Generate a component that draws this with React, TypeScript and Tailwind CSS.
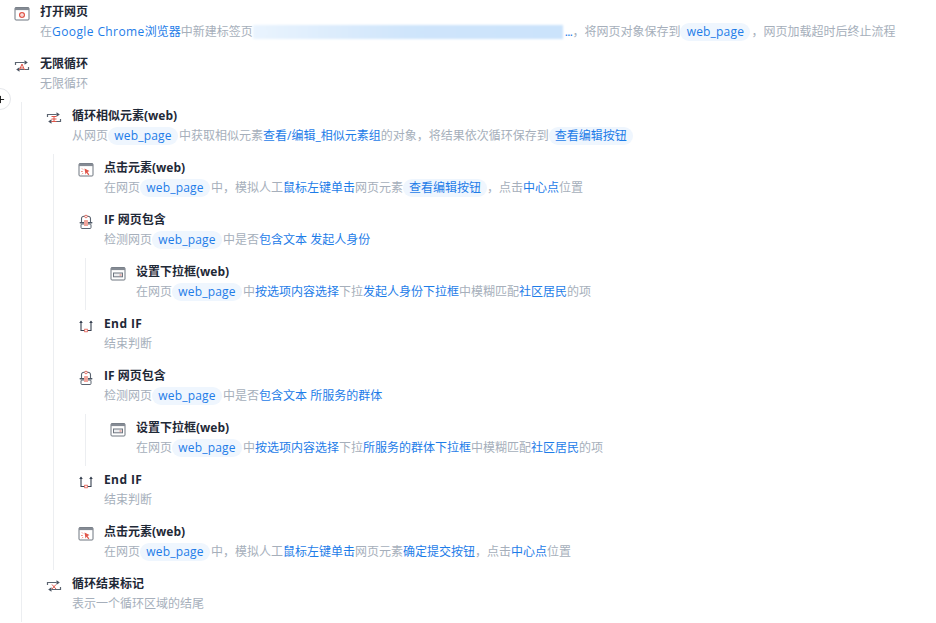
import type { ReactNode } from "react";
import { Plus } from "lucide-react";

const font = "font-['Open_Sans','Noto_Sans_CJK_SC',sans-serif]";

function WindowIcon({ children }: { children?: ReactNode }) {
  return (
    <svg width="16" height="16" viewBox="0 0 16 16" fill="none">
      <rect x="1" y="1.5" width="14" height="12.5" rx="1" stroke="#6f7680" strokeWidth="1" />
      <rect x="1" y="1.5" width="14" height="2.6" fill="#858b94" />
      {children}
    </svg>
  );
}

const OpenIcon = () => (
  <WindowIcon>
    <circle cx="8" cy="9" r="2.4" stroke="#e0564a" strokeWidth="1.3" />
    <circle cx="8" cy="9" r="0.6" fill="#e0564a" />
  </WindowIcon>
);

const ClickIcon = () => (
  <WindowIcon>
    <path d="M6.5 6.5l5 2.6-2 .8 1.8 2.6-1 .7-1.8-2.5-1 1.8z" fill="#e0564a" />
    <path d="M4 6.5l1 1M3.2 9.5h1.5M4 12.2l1-1" stroke="#e0564a" strokeWidth="0.8" />
  </WindowIcon>
);

const SelectIcon = () => (
  <WindowIcon>
    <rect x="3.5" y="7" width="9" height="3.8" fill="#eceef0" stroke="#6f7680" strokeWidth="1" />
    <path d="M9.5 9h2" stroke="#e0564a" strokeWidth="0.8" />
  </WindowIcon>
);

function LoopIcon({ children }: { children?: ReactNode }) {
  return (
    <svg width="16" height="16" viewBox="0 0 16 16" fill="none">
      <path d="M1.5 7V4.5h9" stroke="#5b6470" strokeWidth="1.2" />
      <path d="M10.5 2.2l3.3 2.3-3.3 2.3z" fill="#4b5563" />
      <path d="M14.5 9v2.5h-9" stroke="#5b6470" strokeWidth="1.2" />
      <path d="M5.5 9.2l-3.3 2.3 3.3 2.3z" fill="#4b5563" />
      <g stroke="#e0564a" strokeWidth="1">{children}</g>
    </svg>
  );
}

const IfIcon = () => (
  <svg width="16" height="16" viewBox="0 0 16 16" fill="none">
    <path d="M3.5 8V4.5C3.5 3 5.5 2 8 2s4.5 1 4.5 2.5V8" stroke="#5b6470" strokeWidth="1.1" />
    <circle cx="8" cy="2.5" r="1.3" fill="#fff" stroke="#e0564a" strokeWidth="0.8" />
    <rect x="1.5" y="8" width="13" height="1.6" rx="0.8" fill="#4b5563" />
    <rect x="3" y="10" width="10" height="4.5" rx="1" fill="none" stroke="#5b6470" strokeWidth="1" />
    <rect x="6" y="6" width="4" height="6" rx="0.5" fill="#f0a49b" />
  </svg>
);

const EndIfIcon = () => (
  <svg width="16" height="16" viewBox="0 0 16 16" fill="none">
    <path d="M3 3.5V12.5H6.5M13 3.5V12.5H9.5" stroke="#374151" strokeWidth="1.1" />
    <path d="M1.2 5L3 2.5 4.8 5zM11.2 5L13 2.5 14.8 5z" fill="#374151" />
    <rect x="6.7" y="11.2" width="2.6" height="2.6" fill="#fff" stroke="#e0564a" strokeWidth="0.8" />
  </svg>
);

const B = ({ children }: { children: ReactNode }) => <span className="text-[#1d7ce8]">{children}</span>;

const Web = () => (
  <span className="mr-px inline-flex h-[18px] w-[70px] items-center justify-center rounded-full bg-[#eff6fe] tracking-[0.2px] text-[#1d7ce8]">
    web_page
  </span>
);

const Pill = ({ children }: { children: ReactNode }) => (
  <span className="inline-flex h-[18px] items-center rounded-full bg-[#eff6fe] px-1.5 text-[#1d7ce8]">{children}</span>
);

function Row({ icon, title, children }: { icon: ReactNode; title: ReactNode; children: ReactNode }) {
  return (
    <div className="flex h-12 shrink-0">
      <div className="mr-2.5 w-4 shrink-0 pt-1">{icon}</div>
      <div className="min-w-0 whitespace-nowrap">
        <div className="h-5 text-xs leading-5 font-bold text-[#1f2937]">{title}</div>
        <div className="flex h-5 items-center text-xs text-[#a6afbb]">{children}</div>
      </div>
    </div>
  );
}

function Branch({ children }: { children: ReactNode }) {
  return <div className="-mt-1 ml-[7px] flex flex-col gap-1 border-l border-[#eceef1] pt-1 pl-6">{children}</div>;
}

const EndIf = () => <span className="tracking-[0.4px]">End IF</span>;

export default function App() {
  return (
    <div className={`relative h-[623px] w-[936px] overflow-hidden bg-white pt-0.5 pl-3.5 ${font}`}>
      <div className="absolute top-[88px] -left-[11px] flex h-[22px] w-[22px] items-center justify-center rounded-full border border-[#e5e7eb] bg-white text-[#111]">
        <Plus size={11} strokeWidth={2} />
      </div>
      <div className="flex flex-col gap-1">
        <Row icon={<OpenIcon />} title="打开网页">
          <span>在</span>
          <B>
            <span className="tracking-[0.4px]">Google Chrome</span>浏览器
          </B>
          <span>中新建标签页</span>
          <span className="mr-0.5 h-3.5 w-[310px] bg-gradient-to-r from-[#eaf4fe] via-[#cfe5fb] to-[#cbe3fb] blur-[1px]" />
          <span className="tracking-[-0.6px] text-[#1d7ce8]">...</span>
          <span>，将网页对象保存到</span>
          <Web />
          <span>，网页加载超时后终止流程</span>
        </Row>
        <Row
          icon={
            <LoopIcon>
              <path d="M5.5 12L8 6l2.5 6M6.5 10h3" />
            </LoopIcon>
          }
          title="无限循环"
        >
          无限循环
        </Row>
        <Branch>
          <Row
            icon={
              <LoopIcon>
                <path d="M5.5 6.5h5M8 6.5V11M5.5 9h5M5.5 11.5h5" />
              </LoopIcon>
            }
            title="循环相似元素(web)"
          >
            <span>从网页</span>
            <Web />
            <span>中获取相似元素</span>
            <B>查看/编辑_相似元素组</B>
            <span>的对象，将结果依次循环保存到</span>
            <Pill>查看编辑按钮</Pill>
          </Row>
          <Branch>
            <Row icon={<ClickIcon />} title="点击元素(web)">
              <span>在网页</span>
              <Web />
              <span>中，模拟人工</span>
              <B>鼠标左键单击</B>
              <span>网页元素</span>
              <Pill>查看编辑按钮</Pill>
              <span>，点击</span>
              <B>中心点</B>
              <span>位置</span>
            </Row>
            <Row icon={<IfIcon />} title="IF 网页包含">
              <span>检测网页</span>
              <Web />
              <span>中是否</span>
              <B>包含文本 发起人身份</B>
            </Row>
            <Branch>
              <Row icon={<SelectIcon />} title="设置下拉框(web)">
                <span>在网页</span>
                <Web />
                <span>中</span>
                <B>按选项内容选择</B>
                <span>下拉</span>
                <B>发起人身份下拉框</B>
                <span>中模糊匹配</span>
                <B>社区居民</B>
                <span>的项</span>
              </Row>
            </Branch>
            <Row icon={<EndIfIcon />} title={<EndIf />}>
              结束判断
            </Row>
            <Row icon={<IfIcon />} title="IF 网页包含">
              <span>检测网页</span>
              <Web />
              <span>中是否</span>
              <B>包含文本 所服务的群体</B>
            </Row>
            <Branch>
              <Row icon={<SelectIcon />} title="设置下拉框(web)">
                <span>在网页</span>
                <Web />
                <span>中</span>
                <B>按选项内容选择</B>
                <span>下拉</span>
                <B>所服务的群体下拉框</B>
                <span>中模糊匹配</span>
                <B>社区居民</B>
                <span>的项</span>
              </Row>
            </Branch>
            <Row icon={<EndIfIcon />} title={<EndIf />}>
              结束判断
            </Row>
            <Row icon={<ClickIcon />} title="点击元素(web)">
              <span>在网页</span>
              <Web />
              <span>中，模拟人工</span>
              <B>鼠标左键单击</B>
              <span>网页元素</span>
              <B>确定提交按钮</B>
              <span>，点击</span>
              <B>中心点</B>
              <span>位置</span>
            </Row>
          </Branch>
          <Row
            icon={
              <LoopIcon>
                <path d="M6 6.5l4 4.5M10 6.5l-4 4.5" />
              </LoopIcon>
            }
            title="循环结束标记"
          >
            表示一个循环区域的结尾
          </Row>
        </Branch>
      </div>
    </div>
  );
}
